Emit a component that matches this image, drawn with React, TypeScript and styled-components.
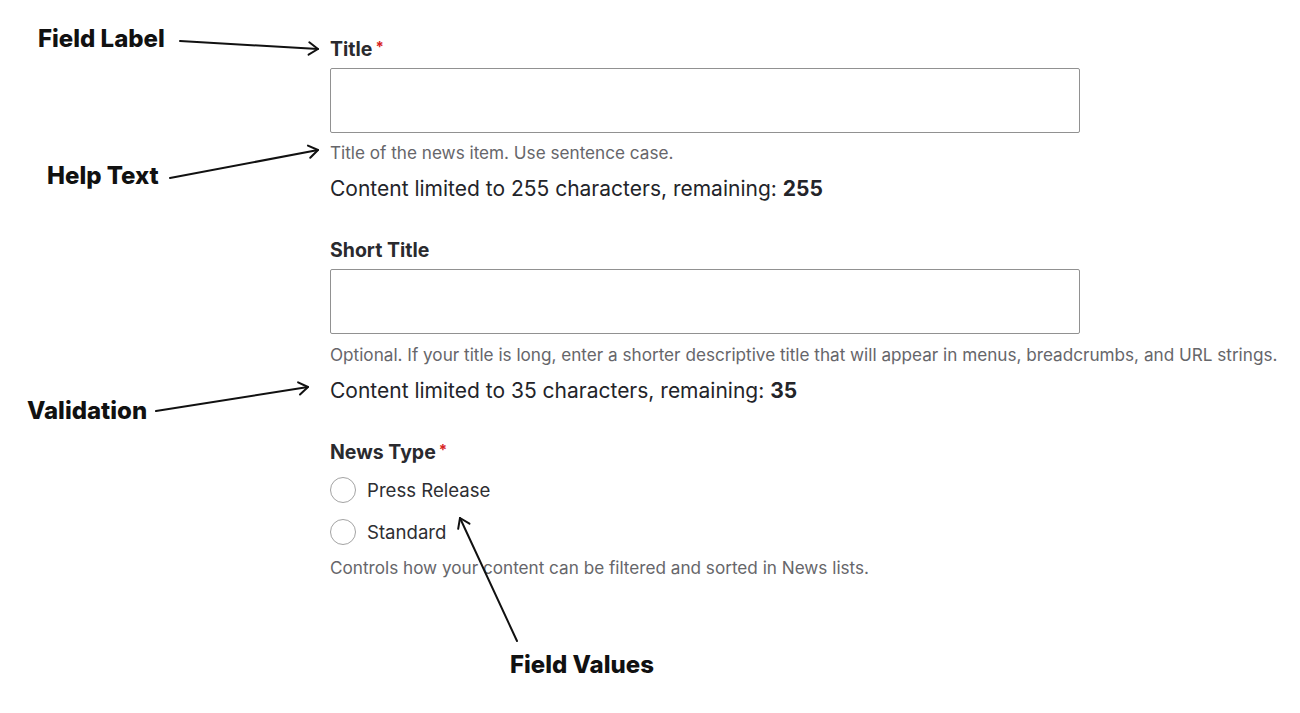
import React from "react";
import styled, { createGlobalStyle } from "styled-components";

const Global = createGlobalStyle`
  html, body { margin: 0; padding: 0; background: #ffffff; }
  body { font-family: Inter, "Liberation Sans", sans-serif; color: #232429; }
`;

const Page = styled.div`
  position: relative;
  width: 1300px;
  height: 713px;
  overflow: hidden;
  background: #fff;
`;

const Form = styled.form`
  display: flex;
  flex-direction: column;
  padding: 37px 0 0 330px;
`;

const Field = styled.div`
  display: flex;
  flex-direction: column;
  align-items: flex-start;
  margin-bottom: 35px;
`;

const Label = styled.label`
  font-size: 19.5px;
  font-weight: 700;
  line-height: 24px;
  color: #2a2a2e;
  display: flex;
  align-items: center;
  gap: 3px;
`;

const Required = styled.span`
  color: #d72222;
  font-size: 15px;
  line-height: 14px;
  margin-top: -5px;
`;

const TextInput = styled.input`
  box-sizing: border-box;
  width: 750px;
  height: 65px;
  margin-top: 7px;
  border: 1px solid #919191;
  border-radius: 2px;
  background: #fff;
  font: inherit;
`;

const Help = styled.div<{ $gap?: number }>`
  font-size: 17.15px;
  line-height: 20px;
  color: #66666a;
  margin-top: ${(p) => p.$gap ?? 10}px;
  white-space: nowrap;
`;

const Counter = styled.div`
  font-size: 21px;
  line-height: 28px;
  color: #232429;
  margin-top: 12px;
  white-space: nowrap;
  b { font-weight: 700; }
`;

const RadioList = styled.div`
  display: flex;
  flex-direction: column;
  gap: 12px;
  margin-top: 11px;
`;

const RadioRow = styled.label`
  display: flex;
  align-items: center;
  gap: 11px;
  height: 30px;
  font-size: 18.6px;
  color: #2e2e32;
`;

const RadioCircle = styled.span`
  box-sizing: border-box;
  width: 26px;
  height: 26px;
  border-radius: 50%;
  border: 1.5px solid #a3a3a3;
  background: #fff;
`;

const Note = styled.div<{ $left: number; $top: number }>`
  position: absolute;
  left: ${(p) => p.$left}px;
  top: ${(p) => p.$top}px;
  font-family: Inter, "Liberation Sans", sans-serif;
  font-weight: 800;
  font-size: 24px;
  line-height: 30px;
  color: #111;
  white-space: nowrap;
`;

const Arrows = styled.svg`
  position: absolute;
  left: 0;
  top: 0;
  pointer-events: none;
`;

type Arrow = { x1: number; y1: number; x2: number; y2: number };

const arrows: Arrow[] = [
  { x1: 180, y1: 41, x2: 318, y2: 49 },
  { x1: 170, y1: 178, x2: 318, y2: 150 },
  { x1: 156, y1: 411, x2: 308, y2: 387 },
  { x1: 517, y1: 641, x2: 460, y2: 518 },
];

function head(a: Arrow) {
  const ang = Math.atan2(a.y2 - a.y1, a.x2 - a.x1);
  const len = 11;
  const spread = 0.6;
  const p1x = a.x2 - len * Math.cos(ang - spread);
  const p1y = a.y2 - len * Math.sin(ang - spread);
  const p2x = a.x2 - len * Math.cos(ang + spread);
  const p2y = a.y2 - len * Math.sin(ang + spread);
  return `M${p1x} ${p1y} L${a.x2} ${a.y2} L${p2x} ${p2y}`;
}

export default function App() {
  return (
    <Page>
      <Global />
      <Form>
        <Field>
          <Label>
            Title<Required>*</Required>
          </Label>
          <TextInput type="text" />
          <Help>Title of the news item. Use sentence case.</Help>
          <Counter>
            Content limited to 255 characters, remaining: <b>255</b>
          </Counter>
        </Field>
        <Field>
          <Label>Short Title</Label>
          <TextInput type="text" />
          <Help $gap={11}>
            Optional. If your title is long, enter a shorter descriptive title that will appear in menus, breadcrumbs, and URL strings.
          </Help>
          <Counter>
            Content limited to 35 characters, remaining: <b>35</b>
          </Counter>
        </Field>
        <Field>
          <Label>
            News Type<Required>*</Required>
          </Label>
          <RadioList>
            <RadioRow>
              <RadioCircle />
              Press Release
            </RadioRow>
            <RadioRow>
              <RadioCircle />
              Standard
            </RadioRow>
          </RadioList>
          <Help $gap={11}>Controls how your content can be filtered and sorted in News lists.</Help>
        </Field>
      </Form>

      <Note $left={38} $top={24}>Field Label</Note>
      <Note $left={47} $top={161}>Help Text</Note>
      <Note $left={27} $top={396}>Validation</Note>
      <Note $left={510} $top={650}>Field Values</Note>

      <Arrows width={1300} height={713} viewBox="0 0 1300 713">
        {arrows.map((a, i) => (
          <g key={i} stroke="#111" strokeWidth={2} fill="none" strokeLinecap="round" strokeLinejoin="round">
            <line x1={a.x1} y1={a.y1} x2={a.x2} y2={a.y2} />
            <path d={head(a)} />
          </g>
        ))}
      </Arrows>
    </Page>
  );
}
